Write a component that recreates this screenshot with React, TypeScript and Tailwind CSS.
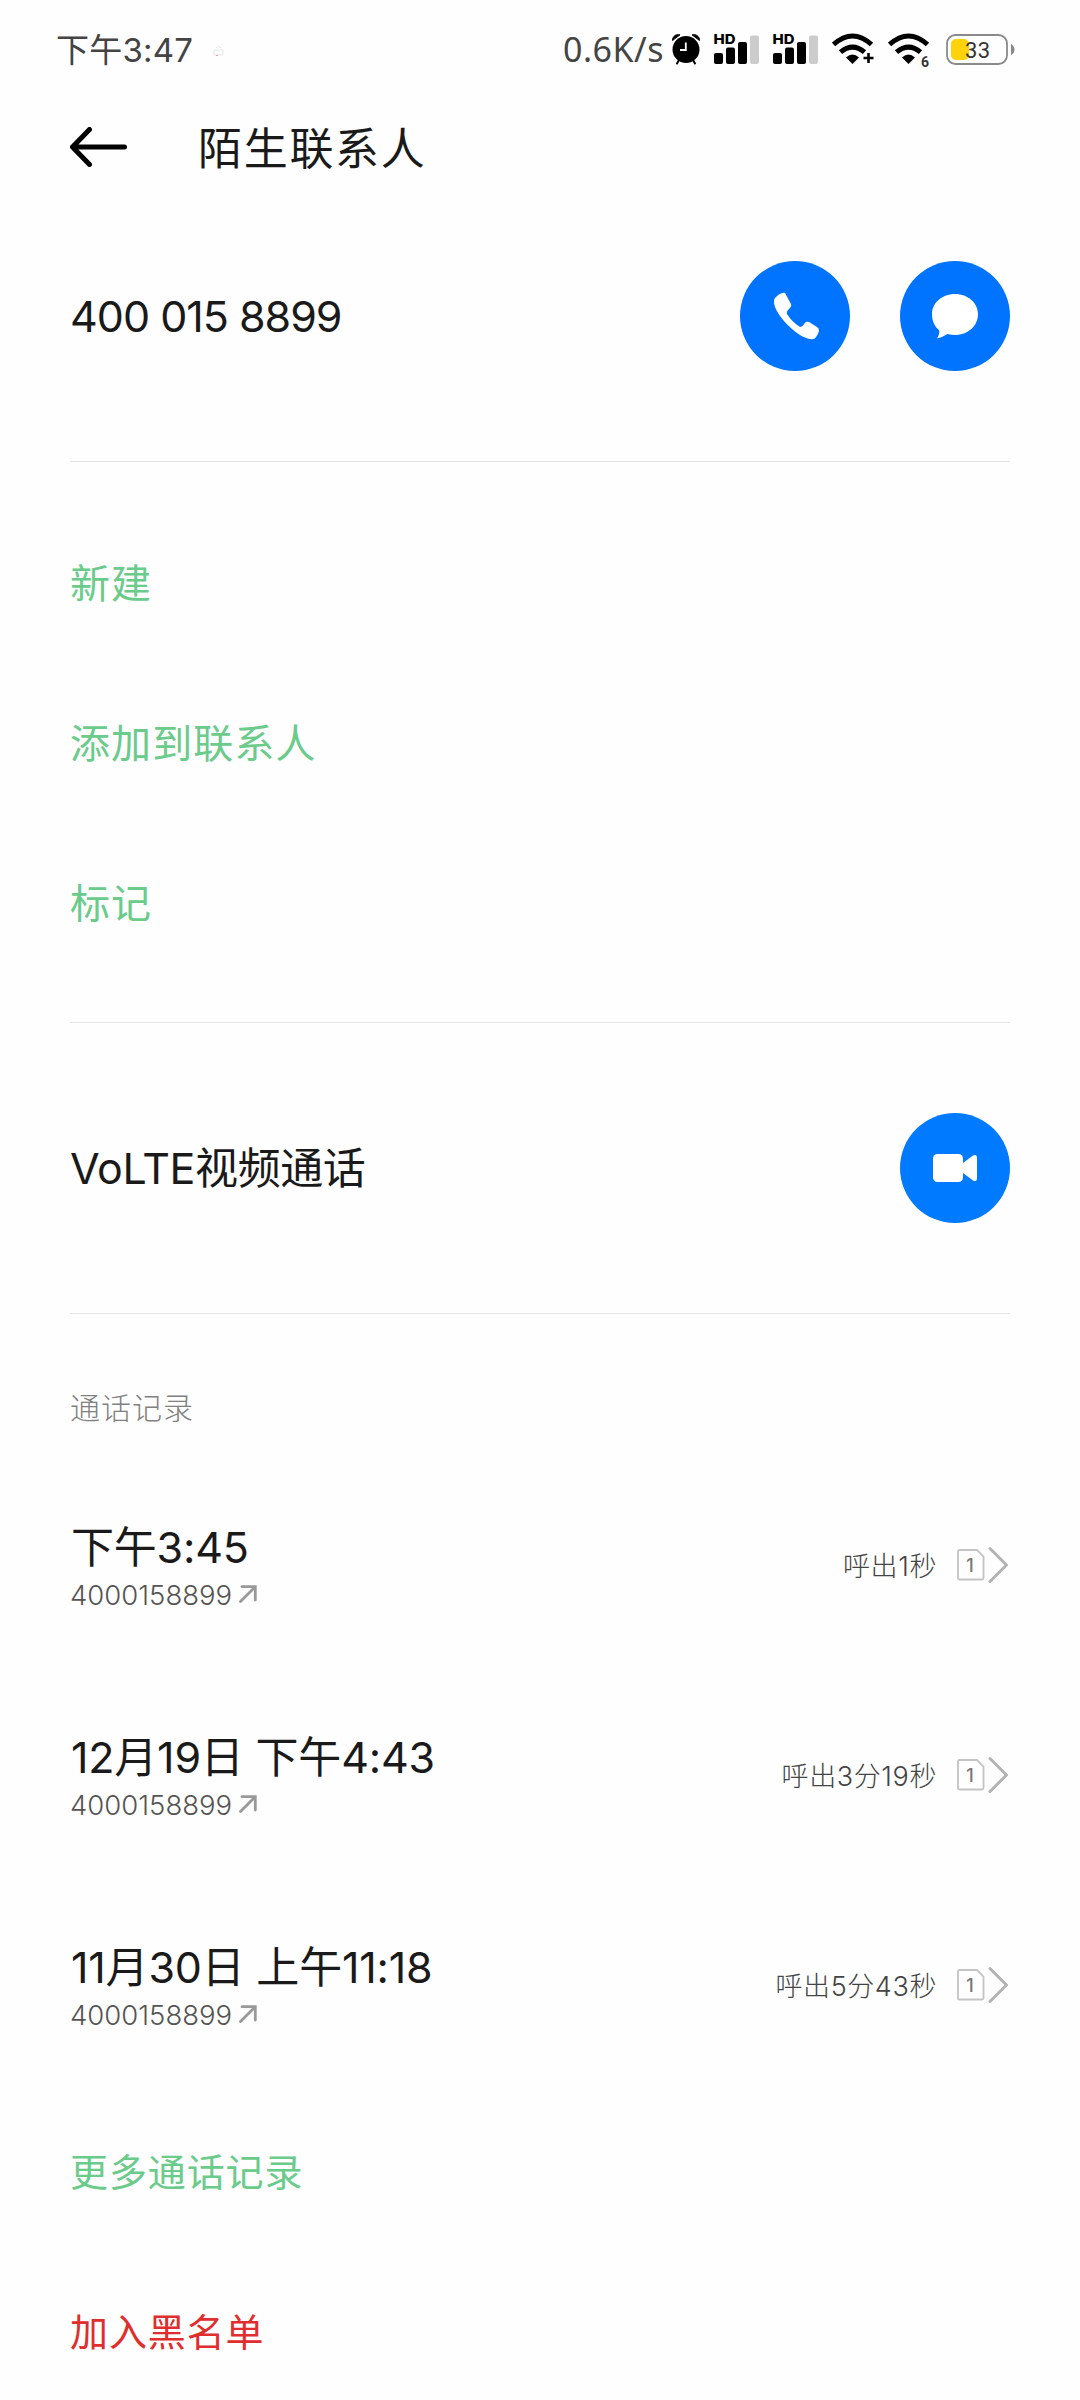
import type { ReactNode } from "react";

interface CallLog {
  id: number;
  time: string;
  duration: string;
}

const PHONE = "4000158899";

const logs: CallLog[] = [
  { id: 1, time: "下午3:45", duration: "呼出1秒" },
  { id: 2, time: "12月19日 下午4:43", duration: "呼出3分19秒" },
  { id: 3, time: "11月30日 上午11:18", duration: "呼出5分43秒" },
];

function AlarmIcon() {
  return (
    <svg width="30" height="32" viewBox="0 0 30 32">
      <circle cx="15" cy="16.5" r="13.5" fill="#000" />
      <path d="M1.5 7.5C1.5 3 5 1 9 1.8Z" fill="#000" stroke="#000" strokeLinejoin="round" />
      <path d="M28.5 7.5C28.5 3 25 1 21 1.8Z" fill="#000" stroke="#000" strokeLinejoin="round" />
      <path d="M8 27l-2 3.5M22 27l2 3.5" stroke="#000" strokeWidth="2" strokeLinecap="round" />
      <path d="M14.8 9.5V17H9" fill="none" stroke="#fff" strokeWidth="1.8" />
    </svg>
  );
}

function SignalIcon() {
  return (
    <svg className="overflow-visible" width="46" height="32" viewBox="0 0 46 32">
      <text x="-0.4" y="11.2" fontSize="13.5" fontWeight="800" fontFamily="Inter" textLength="22" lengthAdjust="spacingAndGlyphs">
        HD
      </text>
      <rect x="0" y="20" width="9" height="11" rx="2" />
      <rect x="12" y="14.5" width="9" height="16.5" rx="2" />
      <rect x="24" y="9" width="9" height="22" rx="2" />
      <rect x="36" y="2.5" width="9" height="28.5" rx="2" fill="#ccc" />
    </svg>
  );
}

function WifiIcon({ children }: { children: ReactNode }) {
  return (
    <svg width="44" height="36" viewBox="0 0 44 36">
      <path d="M1.5 11.5Q20.5 -5.5 39.5 11.5" fill="none" stroke="#000" strokeWidth="5" />
      <path d="M8.5 19.2Q20.5 9 32.5 19.2" fill="none" stroke="#000" strokeWidth="5" />
      <path d="M14 24.5Q20.5 18.5 27 24.5L20.5 31Z" />
      {children}
    </svg>
  );
}

function BatteryIcon() {
  return (
    <svg width="70" height="32" viewBox="0 0 70 32">
      <rect x="1" y="1" width="60" height="29" rx="8.5" fill="none" stroke="#8a8a8a" strokeWidth="1.8" />
      <path d="M65 10q3.5 2 3.5 5.5T65 21Z" fill="#8a8a8a" />
      <rect x="5" y="5" width="18" height="21" rx="5" fill="#ffd20a" />
      <text x="19" y="23.5" fontSize="22" fontFamily="Roboto" fill="#333" textLength="25">
        33
      </text>
    </svg>
  );
}

function StatusBar() {
  return (
    <div className="flex h-[98px] shrink-0 items-center pl-[56px] pr-[64px] text-[#444]">
      <span className="pt-[2px] text-[33px] leading-none tracking-[0.2px]">下午3:47</span>
      <svg className="ml-[20px] mt-[4px]" width="11" height="12" viewBox="0 0 11 12" fill="none" stroke="#ddd">
        <path d="M3 3q2.5-3 5 0M1 5h9v5H1Z" strokeWidth="0.7" />
        <path d="M3 10.5h2" stroke="#f0a0a0" />
      </svg>
      <div className="ml-auto flex items-center">
        <span className="font-['Noto_Sans'] text-[34px] leading-none tracking-[0.5px]">0.6K/s</span>
        <div className="ml-[7px] flex">
          <AlarmIcon />
        </div>
        <div className="ml-[13px] flex gap-[13px]">
          <SignalIcon />
          <SignalIcon />
        </div>
        <div className="ml-[13px] mt-[4px] flex gap-[12px]">
          <WifiIcon>
            <path d="M31.5 25h10M36.5 20v10" stroke="#000" strokeWidth="2.6" />
          </WifiIcon>
          <WifiIcon>
            <text x="33" y="33.5" fontSize="14" fontWeight="700" fontFamily="Roboto" fill="#333">
              6
            </text>
          </WifiIcon>
        </div>
        <div className="ml-[14px] mt-px flex">
          <BatteryIcon />
        </div>
      </div>
    </div>
  );
}

function RoundButton({ label, className, children }: { label: string; className: string; children: ReactNode }) {
  return (
    <button aria-label={label} className={`size-[110px] shrink-0 rounded-full ${className}`}>
      <svg width="110" height="110" viewBox="0 0 110 110" fill="#fff">
        {children}
      </svg>
    </button>
  );
}

function ActionRow({ label, className }: { label: string; className: string }) {
  return (
    <button className={`flex h-[160px] shrink-0 items-center px-[70px] pt-[3px] text-left leading-none ${className}`}>
      {label}
    </button>
  );
}

function Divider() {
  return <div className="mx-[70px] h-px shrink-0 bg-[#e4e4e4]" />;
}

function LogRow({ log }: { log: CallLog }) {
  return (
    <div className="flex h-[210px] shrink-0 items-center justify-between px-[70px]">
      <div className="pt-[5px]">
        <div className="pl-px text-[43px] leading-[56px] tracking-[-0.2px] text-[#1a1a1a]">{log.time}</div>
        <div className="flex h-[42px] items-center text-[27.5px] leading-none font-light text-[#555]">
          <span>{PHONE}</span>
          <svg className="mb-[4px] ml-[7px]" width="18" height="18" viewBox="0 0 18 18" fill="none" stroke="#999" strokeWidth="2.8">
            <path d="M1.5 16.5L15.5 2.5M3 1.7H16.3V15" strokeLinecap="round" />
          </svg>
        </div>
      </div>
      <div className="flex items-center text-[27px] leading-none text-[#666]">
        <span className="pt-[2px] font-light tracking-[0.6px] text-[#444]">{log.duration}</span>
        <svg className="ml-[20px]" width="28" height="32" viewBox="0 0 28 32">
          <path
            d="M2.5 1H20L26.5 7.5V29Q26.5 30.5 25 30.5H2.5Q1 30.5 1 29V2.5Q1 1 2.5 1Z"
            fill="none"
            stroke="#c4c4c4"
            strokeWidth="1.8"
          />
          <text x="9.2" y="22.5" fontSize="18" fontWeight="500" fontFamily="Inter" fill="#777">
            1
          </text>
        </svg>
        <svg className="ml-[3px]" width="22" height="38" viewBox="0 0 22 38" fill="none" stroke="#b3b3b3" strokeWidth="3">
          <path d="M2 2.5L18.5 19L2 35.5" strokeLinecap="round" strokeLinejoin="round" />
        </svg>
      </div>
    </div>
  );
}

export default function App() {
  return (
    <main className="flex h-[2400px] w-[1080px] flex-col overflow-hidden bg-[#fefefe] font-['Inter','Noto_Sans_CJK_SC',sans-serif] text-[#1a1a1a]">
      <StatusBar />

      <header className="flex h-[98px] shrink-0 items-center pl-[70px]">
        <svg width="58" height="40" viewBox="0 0 58 40" fill="none" stroke="#000" strokeWidth="5" strokeLinecap="round" strokeLinejoin="round">
          <path d="M54.5 20H3M19.5 2.5L2.5 20L19.5 37.5" />
        </svg>
        <h1 className="ml-[70px] pt-[3px] text-[44px] leading-none tracking-[1.7px]">陌生联系人</h1>
      </header>

      <section className="flex h-[265px] shrink-0 items-start justify-between px-[70px] pt-[65px]">
        <span className="text-[43px] leading-[110px] tracking-[-1px]">400 015 8899</span>
        <div className="flex gap-[50px]">
          <RoundButton label="拨打电话" className="bg-[#0073ff]">
            <path d="M35 37C38 34 42 31 45 32L51 43C52 45 50 47 48 49Q46 51 47 53Q52 61 60 66Q62 66 65 62Q66 60 69 61L77 66Q79 67 79 70Q77 76 74 78C68 79 60 75 52 68C41 58 33 47 34 39Z" />
          </RoundButton>
          <RoundButton label="发送短信" className="bg-[#0073ff]">
            <path d="M55 33C68 33 78 42 78 53C78 65 68 74 55 74Q51 74 47.5 73Q42 76.5 37 77.5Q40 73 39 69C34 65 32 59 32 53C32 42 42 33 55 33Z" />
          </RoundButton>
        </div>
      </section>
      <Divider />

      <section className="flex shrink-0 flex-col py-[40px]">
        <ActionRow label="新建" className="text-[40px] tracking-[1.1px] text-[#6acb8b]" />
        <ActionRow label="添加到联系人" className="text-[40px] tracking-[1.1px] text-[#6acb8b]" />
        <ActionRow label="标记" className="text-[40px] tracking-[1.1px] text-[#6acb8b]" />
      </section>
      <Divider />

      <section className="flex h-[290px] shrink-0 items-center justify-between px-[70px]">
        <span className="pt-px text-[43px] leading-none tracking-[-0.4px]">VoLTE视频通话</span>
        <RoundButton label="视频通话" className="bg-[#007aff]">
          <rect x="33" y="41" width="30" height="28" rx="4.5" />
          <path d="M63 50L73 42.5Q77 40.5 77 45V65Q77 69.5 73 67.5L63 60Z" />
        </RoundButton>
      </section>
      <Divider />

      <h2 className="h-[146px] shrink-0 px-[70px] pt-[64px] text-[30px] leading-[60px] font-light tracking-[1px] text-[#808080]">
        通话记录
      </h2>
      {logs.map((log) => (
        <LogRow key={log.id} log={log} />
      ))}

      <ActionRow label="更多通话记录" className="text-[38px] tracking-[0.9px] text-[#6acb8b]" />
      <ActionRow label="加入黑名单" className="text-[38px] tracking-[0.9px] text-[#e02d2d]" />
    </main>
  );
}
